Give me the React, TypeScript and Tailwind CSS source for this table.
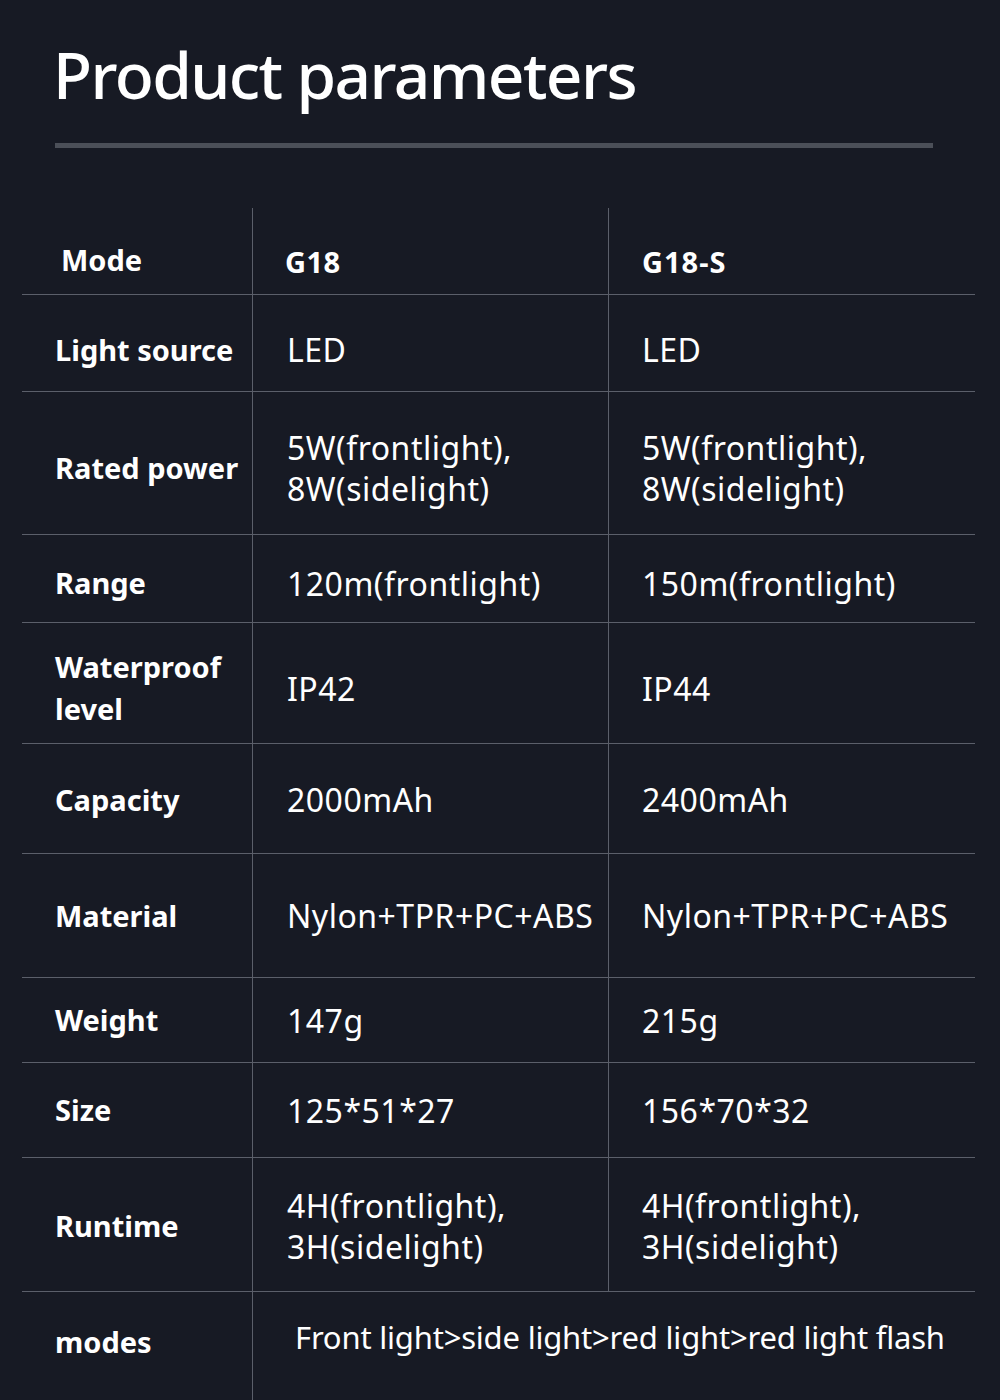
const rows: { label: string[]; h: string; pt: string; a: string[]; b: string[] }[] = [
  { label: ['Light source'], h: 'h-[97px]', pt: 'pt-[13px]', a: ['LED'], b: ['LED'] },
  { label: ['Rated power'], h: 'h-[143px]', pt: 'pt-[10px]', a: ['5W(frontlight),', '8W(sidelight)'], b: ['5W(frontlight),', '8W(sidelight)'] },
  { label: ['Range'], h: 'h-[88px]', pt: 'pt-[9px]', a: ['120m(frontlight)'], b: ['150m(frontlight)'] },
  { label: ['Waterproof', 'level'], h: 'h-[121px]', pt: 'pt-[10px]', a: ['IP42'], b: ['IP44'] },
  { label: ['Capacity'], h: 'h-[110px]', pt: 'pt-[2px]', a: ['2000mAh'], b: ['2400mAh'] },
  { label: ['Material'], h: 'h-[124px]', pt: 'pt-0', a: ['Nylon+TPR+PC+ABS'], b: ['Nylon+TPR+PC+ABS'] },
  { label: ['Weight'], h: 'h-[85px]', pt: 'pt-0', a: ['147g'], b: ['215g'] },
  { label: ['Size'], h: 'h-[95px]', pt: 'pt-0', a: ['125*51*27'], b: ['156*70*32'] },
  { label: ['Runtime'], h: 'h-[134px]', pt: 'pt-[2px]', a: ['4H(frontlight),', '3H(sidelight)'], b: ['4H(frontlight),', '3H(sidelight)'] },
];

function Lines({ items }: { items: string[] }) {
  return (
    <div className="leading-[41px]">
      {items.map((t) => (
        <div key={t}>{t}</div>
      ))}
    </div>
  );
}

export default function App() {
  return (
    <div
      className="w-[1000px] h-[1400px] overflow-hidden bg-[#171a24] text-white"
      style={{ fontFamily: '"Noto Sans", "Open Sans", sans-serif' }}
    >
      <div className="pt-[35px] pl-[53px]">
        <h1 className="text-[64px] leading-[80px] font-medium tracking-[-1.6px]">Product parameters</h1>
      </div>
      <div className="ml-[55px] mt-[28px] w-[878px] h-[5px] bg-[#4b4f58]" />

      <div className="mt-[60px] ml-[22px] w-[953px]">
        {/* header */}
        <div className="grid grid-cols-[230px_356px_367px] h-[86px] items-stretch">
          <div className="flex items-center pl-[39px] pt-[18px] text-[29px] font-bold">Mode</div>
          <div className="flex items-center pl-[32px] pt-[22px] text-[29px] font-bold tracking-[0.5px] border-l border-[#5b5f6a]">G18</div>
          <div className="flex items-center pl-[33px] pt-[22px] text-[29px] font-bold tracking-[1px] border-l border-[#5b5f6a]">G18-S</div>
        </div>

        {rows.map((r) => (
          <div
            key={r.label.join(' ')}
            className={`grid grid-cols-[230px_356px_367px] border-t border-[#5b5f6a] ${r.h}`}
          >
            <div className={`flex items-center pl-[33px] text-[29px] font-bold leading-[42px] ${r.pt}`}>
              <div>
                {r.label.map((t) => (
                  <div key={t}>{t}</div>
                ))}
              </div>
            </div>
            <div className={`flex items-center pl-[34px] text-[32px] tracking-[0.5px] border-l border-[#5b5f6a] ${r.pt}`}>
              <Lines items={r.a} />
            </div>
            <div className={`flex items-center pl-[33px] text-[32px] tracking-[0.5px] border-l border-[#5b5f6a] ${r.pt}`}>
              <Lines items={r.b} />
            </div>
          </div>
        ))}

        {/* modes */}
        <div className="grid grid-cols-[230px_723px] border-t border-[#5b5f6a] h-[109px]">
          <div className="pl-[33px] pt-[28px] text-[29px] font-bold">modes</div>
          <div className="pl-[42px] pt-[22px] text-[31px] tracking-[-0.2px] border-l border-[#5b5f6a]">
            Front light&gt;side light&gt;red light&gt;red light flash
          </div>
        </div>
      </div>
    </div>
  );
}
